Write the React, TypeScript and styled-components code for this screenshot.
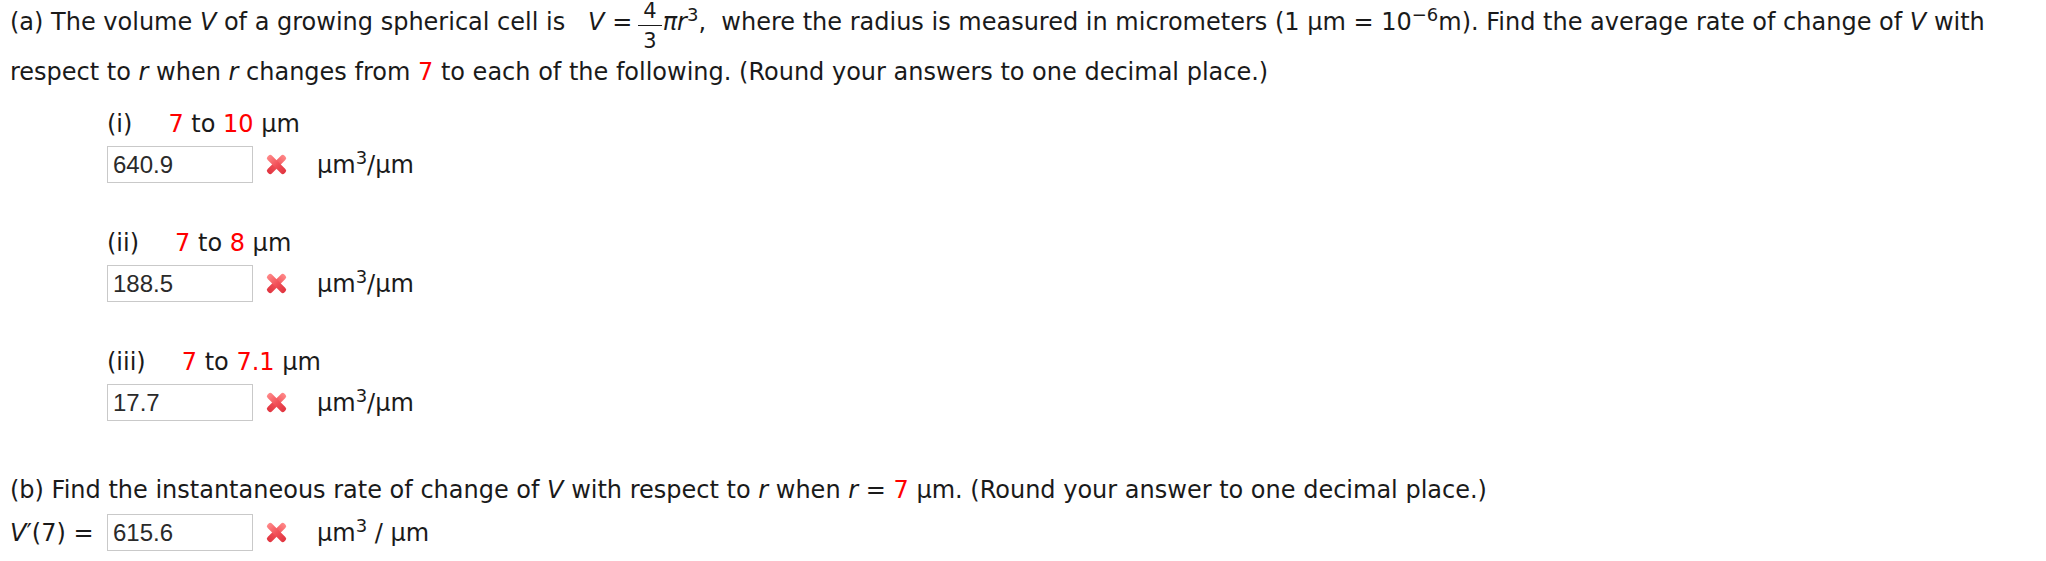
import React from 'react';
import styled, { createGlobalStyle } from 'styled-components';

const GlobalStyle = createGlobalStyle`
  html, body {
    margin: 0;
    padding: 0;
    background: #ffffff;
  }
`;

const Page = styled.div`
  padding: 0 10px;
  font-family: "DejaVu Sans", Verdana, sans-serif;
  font-size: 24px;
  color: #1a1a1a;
`;

const Paragraph = styled.p`
  margin: -3px 0 0;
  line-height: 50px;
  white-space: nowrap;
`;

const Red = styled.span`
  color: #ff0000;
`;

const Var = styled.i`
  font-style: italic;
`;

const Sup = styled.sup`
  font-size: 18px;
  line-height: 0;
  vertical-align: 0.5em;
`;

const Fraction = styled.span`
  display: inline-flex;
  flex-direction: column;
  align-items: center;
  vertical-align: 12px;
  font-size: 21px;
  line-height: 18px;
  margin: -6px 1px -6px 6px;
`;

const Numer = styled.span`
  padding: 0 5px 5px;
  border-bottom: 1.5px solid #1a1a1a;
`;

const Denom = styled.span`
  padding-top: 6px;
`;

const Parts = styled.div`
  margin: 9px 0 0 97px;
  display: flex;
  flex-direction: column;
  gap: 42px;
`;

const Part = styled.div`
  display: flex;
  flex-direction: column;
  gap: 4px;
`;

const PartLabel = styled.div`
  line-height: 36px;
  height: 36px;
`;

const Range = styled.span`
  margin-left: 36px;
`;

const AnswerRow = styled.div`
  display: flex;
  align-items: center;
  height: 37px;
`;

const Prefix = styled.span`
  width: 97px;
  white-space: nowrap;
`;

const AnswerBox = styled.div`
  box-sizing: border-box;
  width: 146px;
  height: 37px;
  border: 1px solid #c9c9c9;
  padding-left: 5px;
  display: flex;
  align-items: center;
  font-family: "Liberation Sans", Arial, sans-serif;
  font-size: 24px;
  color: #2a2a2a;
`;

const Mark = styled.span`
  display: inline-flex;
  margin: 0 28px 0 11px;
`;

const Unit = styled.span`
  white-space: nowrap;
`;

const PartB = styled.div`
  margin-top: 51px;
  display: flex;
  flex-direction: column;
  gap: 6px;
`;

const BLine = styled.div`
  line-height: 36px;
  height: 36px;
  white-space: nowrap;
`;

const Cross = () => (
  <svg width="25" height="25" viewBox="0 0 24 24">
    <defs>
      <linearGradient id="xg" x1="0" y1="0" x2="0" y2="1">
        <stop offset="0" stopColor="#ff8a8a" />
        <stop offset="0.5" stopColor="#f2525a" />
        <stop offset="1" stopColor="#e0343f" />
      </linearGradient>
    </defs>
    <g fill="url(#xg)">
      <rect x="9" y="0.5" width="6" height="23" rx="2.5" transform="rotate(45 12 12)" />
      <rect x="9" y="0.5" width="6" height="23" rx="2.5" transform="rotate(-45 12 12)" />
    </g>
  </svg>
);

type PartData = { label: string; from: string; to: string; value: string };

const parts: PartData[] = [
  { label: '(i)', from: '7', to: '10', value: '640.9' },
  { label: '(ii)', from: '7', to: '8', value: '188.5' },
  { label: '(iii)', from: '7', to: '7.1', value: '17.7' },
];

const App: React.FC = () => {
  return (
    <Page>
      <GlobalStyle />
      <Paragraph>
        (a) The volume <Var>V</Var> of a growing spherical cell is&nbsp;&nbsp; <Var>V</Var> =
        <Fraction>
          <Numer>4</Numer>
          <Denom>3</Denom>
        </Fraction>
        <Var>πr</Var>
        <Sup>3</Sup>,&nbsp; where the radius is measured in micrometers (1 µm = 10<Sup>−6</Sup>m). Find
        the average rate of change of <Var>V</Var> with
        <br />
        respect to <Var>r</Var> when <Var>r</Var> changes from <Red>7</Red> to each of the following.
        (Round your answers to one decimal place.)
      </Paragraph>

      <Parts>
        {parts.map(p => (
          <Part key={p.label}>
            <PartLabel>
              {p.label}
              <Range>
                <Red>{p.from}</Red> to <Red>{p.to}</Red> µm
              </Range>
            </PartLabel>
            <AnswerRow>
              <AnswerBox>{p.value}</AnswerBox>
              <Mark>
                <Cross />
              </Mark>
              <Unit>
                µm<Sup>3</Sup>/µm
              </Unit>
            </AnswerRow>
          </Part>
        ))}
      </Parts>

      <PartB>
        <BLine>
          (b) Find the instantaneous rate of change of <Var>V</Var> with respect to <Var>r</Var> when{' '}
          <Var>r</Var> = <Red>7</Red> µm. (Round your answer to one decimal place.)
        </BLine>
        <AnswerRow>
          <Prefix>
            <Var>V</Var>′(7) =
          </Prefix>
          <AnswerBox>615.6</AnswerBox>
          <Mark>
            <Cross />
          </Mark>
          <Unit>
            µm<Sup>3</Sup> / µm
          </Unit>
        </AnswerRow>
      </PartB>
    </Page>
  );
};

export default App;
